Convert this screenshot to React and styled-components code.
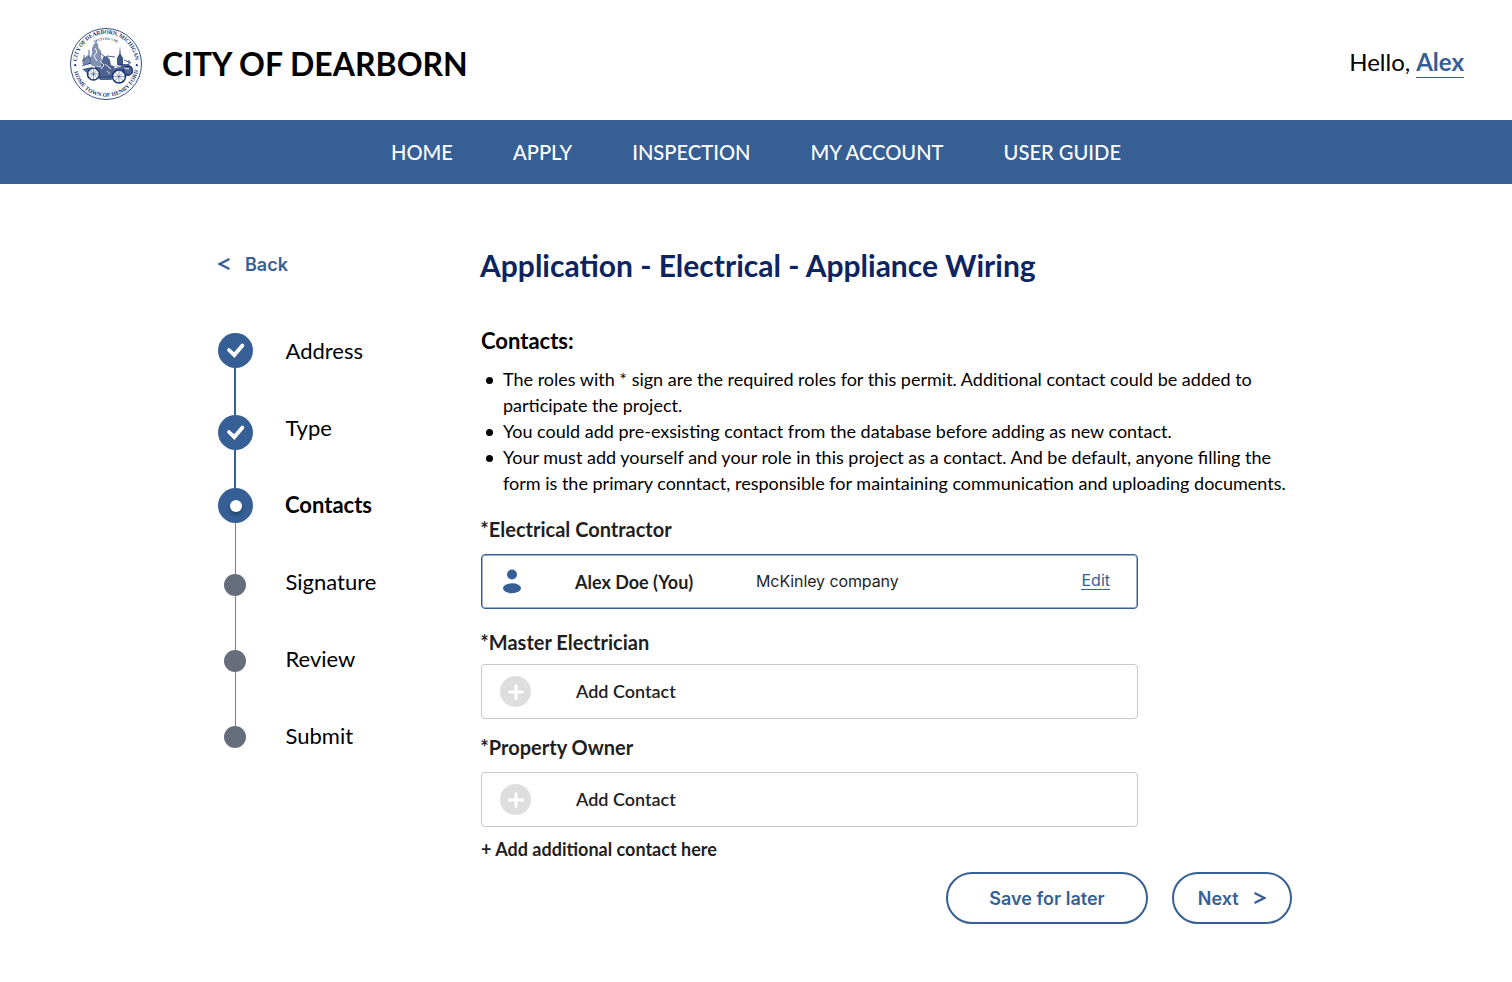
import React from "react";
import styled, { createGlobalStyle } from "styled-components";

const BLUE = "#365f95";
const LATO = `Lato, "Liberation Sans", sans-serif`;
const INTER = `Inter, "Liberation Sans", sans-serif`;

const GlobalStyle = createGlobalStyle`
  * { box-sizing: border-box; }
  body { margin: 0; background: #fff; color: #000; font-family: ${LATO}; }
`;

const Page = styled.div`
  min-height: 982px;
  overflow: hidden;
`;

const Header = styled.header`
  display: flex;
  align-items: center;
  height: 120px;
  padding: 0 48px 0 69px;
`;

const CityName = styled.div`
  margin: 8px 0 0 19px;
  font-size: 32px;
  font-weight: 700;
  line-height: 40px;
`;

const Greeting = styled.div`
  display: flex;
  gap: 6px;
  margin: 4px 0 0 auto;
  font-size: 24px;
  line-height: 30px;
`;

const UserLink = styled.a`
  color: ${BLUE};
  font-weight: 700;
  border-bottom: 1px solid ${BLUE};
`;

const Nav = styled.nav`
  display: flex;
  justify-content: center;
  align-items: center;
  gap: 60px;
  height: 64px;
  background: ${BLUE};
`;

const NavItem = styled.a`
  color: #fff;
  font-size: 20.15px;
  font-weight: 500;
  line-height: 24px;
`;

const Main = styled.main`
  display: grid;
  grid-template-columns: 263px 811px;
  padding: 63px 0 0 218px;
`;

const BackLink = styled.a`
  display: flex;
  align-items: center;
  gap: 15px;
  height: 36px;
  color: ${BLUE};
  font: 600 18px/36px ${INTER};
`;

const Steps = styled.div`
  display: flex;
  gap: 32.5px;
  margin-top: 29px;
`;

const Rail = styled.div`
  display: flex;
  flex-direction: column;
  width: 35px;
  padding-top: 21px;
`;

const Marker = styled.div`
  display: flex;
  align-items: center;
  justify-content: center;
  flex: none;
  width: ${(p) => (p.$pending ? 22 : 35)}px;
  height: ${(p) => (p.$pending ? 22 : 35)}px;
  margin-left: ${(p) => (p.$pending ? 6 : 0)}px;
  border-radius: 50%;
  background: ${(p) => (p.$pending ? "#666d7b" : BLUE)};
`;

const CurrentDot = styled.div`
  width: 12px;
  height: 12px;
  border-radius: 50%;
  background: #fff;
  box-shadow: 0 3px 4px rgba(0, 0, 0, 0.28);
`;

const Connector = styled.div`
  flex: none;
  width: ${(p) => (p.$done ? 2 : 1)}px;
  height: ${(p) => p.$length}px;
  margin-left: ${(p) => (p.$done ? 16 : 17)}px;
  background: ${(p) => (p.$done ? BLUE : "#777b82")};
`;

const StepLabels = styled.div`
  display: flex;
  flex-direction: column;
`;

const StepLabel = styled.div`
  height: 77px;
  margin-left: ${(p) => (p.$current ? -0.5 : 0)}px;
  font-size: 22px;
  font-weight: ${(p) => (p.$current ? 700 : 400)};
  line-height: ${(p) => (p.$current ? 78 : 77)}px;
`;

const Title = styled.h1`
  margin: -1px 0 43px -1px;
  color: #0c2461;
  font-size: 30px;
  font-weight: 700;
  line-height: 38px;
`;

const SectionTitle = styled.h2`
  margin: -1px 0 10px;
  font-size: 22px;
  font-weight: 700;
  line-height: 30px;
`;

const Notes = styled.ul`
  margin: 0 0 21px;
  padding: 0 0 0 22px;
  list-style: none;
  font-size: 18px;
  line-height: 26px;
`;

const Note = styled.li`
  &::before {
    content: "";
    float: left;
    width: 7px;
    height: 7px;
    margin: 11px 0 0 -17px;
    border-radius: 50%;
    background: #000;
  }
`;

const NoteLine = styled.div`
  white-space: nowrap;
`;

const Role = styled.section`
  margin-bottom: ${(p) => p.$after}px;
`;

const RoleLabel = styled.h3`
  margin: 0 0 ${(p) => p.$gap}px -0.7px;
  color: #1f1f1f;
  font-size: 20px;
  font-weight: 700;
  line-height: 24px;
`;

const ContactCard = styled.div`
  display: grid;
  grid-template-columns: ${(p) => (p.$filled ? "75px 181px 1fr auto" : "76px 1fr")};
  align-items: center;
  width: 657px;
  height: 55px;
  padding: 0 27px 0 18px;
  border: ${(p) => (p.$filled ? `1.5px solid ${BLUE}` : "1px solid #c6c6c6")};
  box-shadow: ${(p) => (p.$filled ? "inset 0 0 0 1px #9bb0ca" : "none")};
  border-radius: 4px;
`;

const ContactName = styled.span`
  color: #1f1f1f;
  font-size: 18px;
  font-weight: 700;
  line-height: 24px;
`;

const Company = styled.span`
  margin-top: -1px;
  color: #1f1f1f;
  font: 400 16px/24px ${INTER};
  letter-spacing: -0.1px;
`;

const EditLink = styled.a`
  margin-top: -3px;
  color: ${BLUE};
  font: 400 16px/18px ${INTER};
  border-bottom: 1px solid ${BLUE};
`;

const AddLabel = styled.span`
  margin-top: -2px;
  color: #1f1f1f;
  font-size: 18px;
  font-weight: 600;
  line-height: 24px;
`;

const AddMore = styled.a`
  display: block;
  color: #1f1f1f;
  font-size: 18px;
  font-weight: 700;
  line-height: 24px;
`;

const Actions = styled.div`
  display: flex;
  justify-content: flex-end;
  gap: 24px;
  margin-top: 11px;
`;

const PillButton = styled.button`
  display: flex;
  align-items: center;
  justify-content: center;
  gap: 15.5px;
  width: ${(p) => p.$width}px;
  height: 52px;
  padding: 2px 0 0;
  border: 2px solid ${BLUE};
  border-radius: 26px;
  background: #fff;
  color: ${BLUE};
  font: 600 18px/24px ${INTER};
`;

const Check = () => (
  <svg width="35" height="35" viewBox="0 0 35 35" fill="none">
    <path d="M11 17l5.3 5.1L24.4 12.5" stroke="#fff" strokeWidth="3.8" strokeLinecap="round" />
  </svg>
);

const ChevronIcon = styled.svg`
  flex: none;
  margin-top: -2px;
`;

const Chevron = ({ left }) => (
  <ChevronIcon width="12" height="14" viewBox="0 0 12 14" fill="none" stroke={BLUE} strokeWidth="2.4">
    <path d={left ? "M11.5 2L1.6 7L11.5 12" : "M.5 2L10.4 7L.5 12"} />
  </ChevronIcon>
);

const Person = () => (
  <svg width="22" height="28" viewBox="0 0 22 28" fill={BLUE}>
    <circle cx="12" cy="6.5" r="5" />
    <ellipse cx="12" cy="20.3" rx="9" ry="5" />
  </svg>
);

const Plus = () => (
  <svg width="31" height="31" viewBox="0 0 31 31">
    <circle cx="15.5" cy="15.5" r="15.5" fill="#dedede" />
    <path d="M9.7 16h12.6M16 9.7v12.6" stroke="#fff" strokeWidth="3" strokeLinecap="round" />
  </svg>
);

const SealFrame = styled.svg`
  flex: none;
  margin-top: 8px;
  overflow: visible;
`;

const SealText = styled.text`
  fill: #1d3972;
  font: 700 ${(p) => p.$size}px "Liberation Serif", serif;
`;

const Seal = () => (
  <SealFrame width="74" height="74" viewBox="0 0 74 74" fill="none" stroke="#1d3972">
    <defs>
      <path id="arcTop" d="M7.9 36A29.1 29.1 0 0 1 66.1 36" />
      <path id="arcBottom" d="M4.5 42A32.9 32.9 0 0 0 69.5 42" />
      <path id="arcInner" d="M19 21A24 24 0 0 1 55 21" />
    </defs>
    <circle cx="37" cy="37" r="35.5" strokeWidth=".9" />
    <g stroke="none">
      <SealText $size={5.7}>
        <textPath href="#arcTop" startOffset="1.5" textLength="87">CITY OF DEARBORN, MICHIGAN</textPath>
      </SealText>
      <SealText $size={5.7}>
        <textPath href="#arcBottom" startOffset="3" textLength="88">HOME TOWN OF HENRY FORD</textPath>
      </SealText>
      <SealText $size={3.4}>
        <textPath href="#arcInner" startOffset="8" textLength="24">SETTLED 1786</textPath>
      </SealText>
      <circle cx="6.2" cy="38.2" r="1.1" fill="#1d3972" />
      <circle cx="67.8" cy="38.2" r="1.1" fill="#1d3972" />
    </g>
    <g fill="#1d3972" stroke="none">
      <path d="M25 17l2-2 2 2 .5 4 2.5 3v7l2 3-1 5-7 1-4-2-1-7 2-4v-6z" opacity=".55" />
      <path d="M51 19l.7 8 2.3 4v7h-6v-7l2.3-4z" opacity=".85" />
      <path d="M13 33l6-5 3 3v6l-8 1z" opacity=".6" />
      <path d="M34 30l4-1 3 4 1 5 5 2 5-3h7l4 3 1 6-5 3-7-2-6 3-4 3H31l-4-5-9-2-5-4 11-2h8z" opacity=".78" />
    </g>
    <g strokeWidth="1.6">
      <circle cx="24.5" cy="47" r="6" fill="#fff" />
      <circle cx="50" cy="49.5" r="6.5" fill="#fff" />
      <circle cx="59" cy="43.5" r="4.5" strokeWidth="1.3" />
    </g>
    <path d="M24.5 41v12M18.5 47h12M20.3 42.8l8.4 8.4M28.7 42.8l-8.4 8.4M50 43v13M43.5 49.5h13M45.4 44.9l9.2 9.2M54.6 44.9l-9.2 9.2" strokeWidth=".5" />
    <path d="M30 50h14M13 39l9-3M31 26l5 4M38 29l8 1M55 33l7 3M15 28v6M20 23v8M60 33v5" strokeWidth=".8" />
    <path d="M26 21l2 4-3 4 3 5M31 34l4 4-3 4M36 37l6 5M45 41l7-2M20 38l6 3M55 41l5 1M38 44l3 3" stroke="#fff" strokeWidth=".9" />
  </SealFrame>
);

const NAV = ["HOME", "APPLY", "INSPECTION", "MY ACCOUNT", "USER GUIDE"];
const STEPS = ["Address", "Type", "Contacts", "Signature", "Review", "Submit"];
const NOTES = [
  ["The roles with * sign are the required roles for this permit. Additional contact could be added to", "participate the project."],
  ["You could add pre-exsisting contact from the database before adding as new contact."],
  ["Your must add yourself and your role in this project as a contact. And be default, anyone filling the", "form is the primary conntact, responsible for maintaining communication and uploading documents."],
];

export default function App() {
  return (
    <Page>
      <GlobalStyle />
      <Header>
        <Seal />
        <CityName>CITY OF DEARBORN</CityName>
        <Greeting>
          <span>Hello,</span>
          <UserLink>Alex</UserLink>
        </Greeting>
      </Header>
      <Nav>
        {NAV.map((item) => <NavItem key={item}>{item}</NavItem>)}
      </Nav>
      <Main>
        <aside>
          <BackLink><Chevron left />Back</BackLink>
          <Steps>
            <Rail>
              <Marker><Check /></Marker>
              <Connector $done $length={47} />
              <Marker><Check /></Marker>
              <Connector $done $length={38} />
              <Marker><CurrentDot /></Marker>
              <Connector $length={51} />
              <Marker $pending />
              <Connector $length={54} />
              <Marker $pending />
              <Connector $length={54} />
              <Marker $pending />
            </Rail>
            <StepLabels>
              {STEPS.map((step) => (
                <StepLabel key={step} $current={step === "Contacts"}>{step}</StepLabel>
              ))}
            </StepLabels>
          </Steps>
        </aside>
        <div>
          <Title>Application - Electrical - Appliance Wiring</Title>
          <SectionTitle>Contacts:</SectionTitle>
          <Notes>
            {NOTES.map((lines) => (
              <Note key={lines[0]}>
                {lines.map((line) => <NoteLine key={line}>{line}</NoteLine>)}
              </Note>
            ))}
          </Notes>
          <Role $after={21}>
            <RoleLabel $gap={13}>*Electrical Contractor</RoleLabel>
            <ContactCard $filled>
              <Person />
              <ContactName>Alex Doe (You)</ContactName>
              <Company>McKinley company</Company>
              <EditLink>Edit</EditLink>
            </ContactCard>
          </Role>
          <Role $after={16}>
            <RoleLabel $gap={10}>*Master Electrician</RoleLabel>
            <ContactCard><Plus /><AddLabel>Add Contact</AddLabel></ContactCard>
          </Role>
          <Role $after={10}>
            <RoleLabel $gap={13}>*Property Owner</RoleLabel>
            <ContactCard><Plus /><AddLabel>Add Contact</AddLabel></ContactCard>
          </Role>
          <AddMore>+ Add additional contact here</AddMore>
          <Actions>
            <PillButton $width={202}>Save for later</PillButton>
            <PillButton $width={120}>Next<Chevron /></PillButton>
          </Actions>
        </div>
      </Main>
    </Page>
  );
}
